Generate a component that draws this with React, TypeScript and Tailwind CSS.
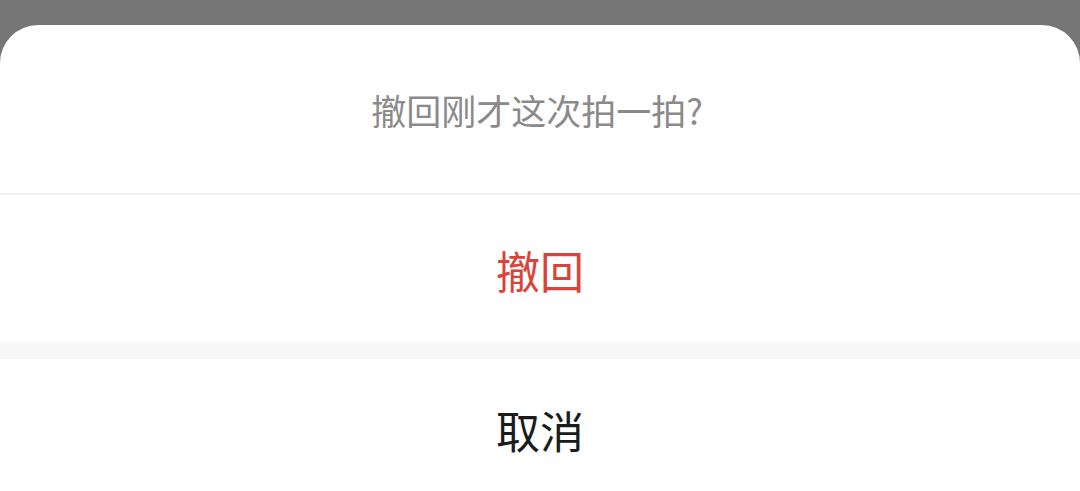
export default function App() {
  const font = { fontFamily: '"Noto Sans CJK SC", "Noto Sans", sans-serif' };
  return (
    <div className="w-[1080px] h-[491px] overflow-hidden bg-[#767676] flex flex-col" style={font}>
      <div className="h-[25px] shrink-0" />
      <div className="flex-1 bg-white rounded-t-[38px] flex flex-col overflow-hidden">
        <div className="h-[170px] shrink-0 flex items-center justify-center border-b-2 border-[#efefef] pr-[6px]">
          <span className="text-[35px] text-[#8a8a8a] leading-none">撤回刚才这次拍一拍?</span>
        </div>
        <div className="h-[147px] shrink-0 flex items-center justify-center pt-[2px]">
          <span className="text-[44px] text-[#d8443c] leading-none">撤回</span>
        </div>
        <div className="h-[17px] shrink-0 bg-[#f7f7f7]" />
        <div className="flex-1 flex items-start justify-center pt-[49px]">
          <span className="text-[44px] text-[#1b1b1b] leading-none">取消</span>
        </div>
      </div>
    </div>
  );
}
